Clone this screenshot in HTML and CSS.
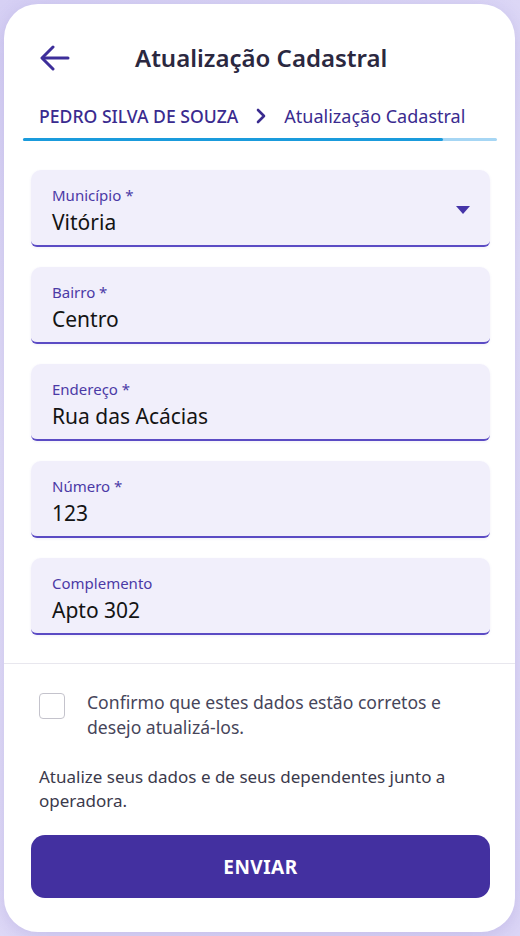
FILE: index.html
```html
<!DOCTYPE html>
<html lang="pt-BR">
<head>
  <meta charset="UTF-8">
  <meta name="viewport" content="width=device-width, initial-scale=1.0">
  <title>Atualização Cadastral</title>
  <link rel="stylesheet" href="styles.css">
</head>
<body>
  <div class="card">
    <header class="top-bar">
      <button class="back" aria-label="Voltar">
        <svg width="30" height="26" viewBox="0 0 30 26" fill="none" stroke="#3d2e9a" stroke-width="3" stroke-linecap="round" stroke-linejoin="round">
          <path d="M28 13H3"/>
          <path d="M13 2L2 13l11 11"/>
        </svg>
      </button>
      <h1>Atualização Cadastral</h1>
    </header>

    <nav class="crumbs">
      <span class="crumb-name">PEDRO SILVA DE SOUZA</span>
      <svg class="crumb-sep" width="12" height="16" viewBox="0 0 12 16" fill="none" stroke="#3a2b8f" stroke-width="2.6" stroke-linecap="round" stroke-linejoin="round">
        <path d="M3 2l6 6-6 6"/>
      </svg>
      <span class="crumb-page">Atualização Cadastral</span>
    </nav>
    <div class="progress"><div class="progress-fill"></div></div>

    <form class="fields">
      <div class="field">
        <label>Município *</label>
        <div class="value">Vitória</div>
        <span class="caret"></span>
      </div>
      <div class="field">
        <label>Bairro *</label>
        <div class="value">Centro</div>
      </div>
      <div class="field">
        <label>Endereço *</label>
        <div class="value">Rua das Acácias</div>
      </div>
      <div class="field">
        <label>Número *</label>
        <div class="value">123</div>
      </div>
      <div class="field">
        <label>Complemento</label>
        <div class="value">Apto 302</div>
      </div>
    </form>

    <hr class="divider">

    <label class="confirm">
      <span class="box"></span>
      <span class="confirm-text">Confirmo que estes dados estão corretos e desejo atualizá-los.</span>
    </label>

    <p class="info">Atualize seus dados e de seus dependentes junto a operadora.</p>

    <button class="send">ENVIAR</button>
  </div>
</body>
</html>
```

FILE: styles.css
```css
body {
  margin: 0;
  font-family: "Noto Sans", "Open Sans", sans-serif;
  background: linear-gradient(160deg, #d6d0f4 0%, #e4e0f8 40%, #dcd6f6 100%);
  min-height: 936px;
}
.card {
  margin: 4px 5px 0 4px;
  height: 928px;
  background: #fff;
  border-radius: 34px;
  box-shadow: 0 4px 18px rgba(90, 70, 180, 0.18);
  overflow: hidden;
  box-sizing: border-box;
  padding-top: 38px;
}
.top-bar {
  display: flex;
  align-items: center;
  height: 32px;
  padding: 0 36px;
}
.back {
  background: none;
  border: none;
  padding: 0;
  width: 30px;
  height: 26px;
  cursor: pointer;
}
.top-bar h1 {
  flex: 1;
  margin: 0 0 0 65px;
  font-size: 24px;
  font-weight: 600;
  color: #2b2840;
  line-height: 32px;
}
.crumbs {
  display: flex;
  align-items: center;
  margin-top: 30px;
  padding-left: 35px;
  height: 24px;
  font-size: 17.6px;
  line-height: 24px;
  color: #3a2b8f;
}
.crumb-name {
  font-weight: 500;
}
.crumb-page {
  font-size: 18px;
}
.crumb-sep {
  margin: 0 17px 0 17px;
}
.progress {
  margin: 10px 18px 0 19px;
  height: 3px;
  background: #a6d6f4;
  border-radius: 2px;
}
.progress-fill {
  width: 88.6%;
  height: 100%;
  background: #1a9bdc;
  border-radius: 2px;
}
.fields {
  margin: 29px 25px 0 27px;
  display: flex;
  flex-direction: column;
  gap: 20px;
}
.field {
  position: relative;
  background: #f1effb;
  border-radius: 10px 10px 6px 6px;
  border-bottom: 2px solid #5b4bc4;
  padding: 15px 21px 9px;
  box-shadow: 0 1px 3px rgba(80, 60, 160, 0.08);
}
.field label {
  display: block;
  font-size: 15px;
  line-height: 20px;
  color: #4b3aa6;
  margin-bottom: 3px;
}
.field .value {
  font-size: 21px;
  line-height: 28px;
  color: #141414;
}
.caret {
  position: absolute;
  right: 20px;
  top: 36px;
  width: 0;
  height: 0;
  border-left: 7px solid transparent;
  border-right: 7px solid transparent;
  border-top: 8px solid #4534a8;
}
.divider {
  margin: 28px 0 0;
  border: none;
  border-top: 1px solid #e8e7ee;
}
.confirm {
  display: flex;
  align-items: flex-start;
  gap: 22px;
  margin-top: 26px;
  padding: 0 30px 0 35px;
  font-size: 17.6px;
  line-height: 25px;
  color: #46455a;
}
.box {
  flex: none;
  width: 24px;
  height: 24px;
  margin-top: 3px;
  border: 1.5px solid #c4c3cc;
  border-radius: 4px;
}
.info {
  margin: 25px 0 0;
  padding: 0 30px 0 35px;
  font-size: 17px;
  line-height: 24px;
  color: #3b3a4c;
}
.send {
  display: block;
  margin: 22px 25px 0 27px;
  width: calc(100% - 52px);
  height: 63px;
  border: none;
  border-radius: 14px;
  background: #4330a0;
  color: #fff;
  font-family: "Noto Sans", "Open Sans", sans-serif;
  font-size: 19px;
  font-weight: 700;
  letter-spacing: 0.5px;
  cursor: pointer;
}
```
